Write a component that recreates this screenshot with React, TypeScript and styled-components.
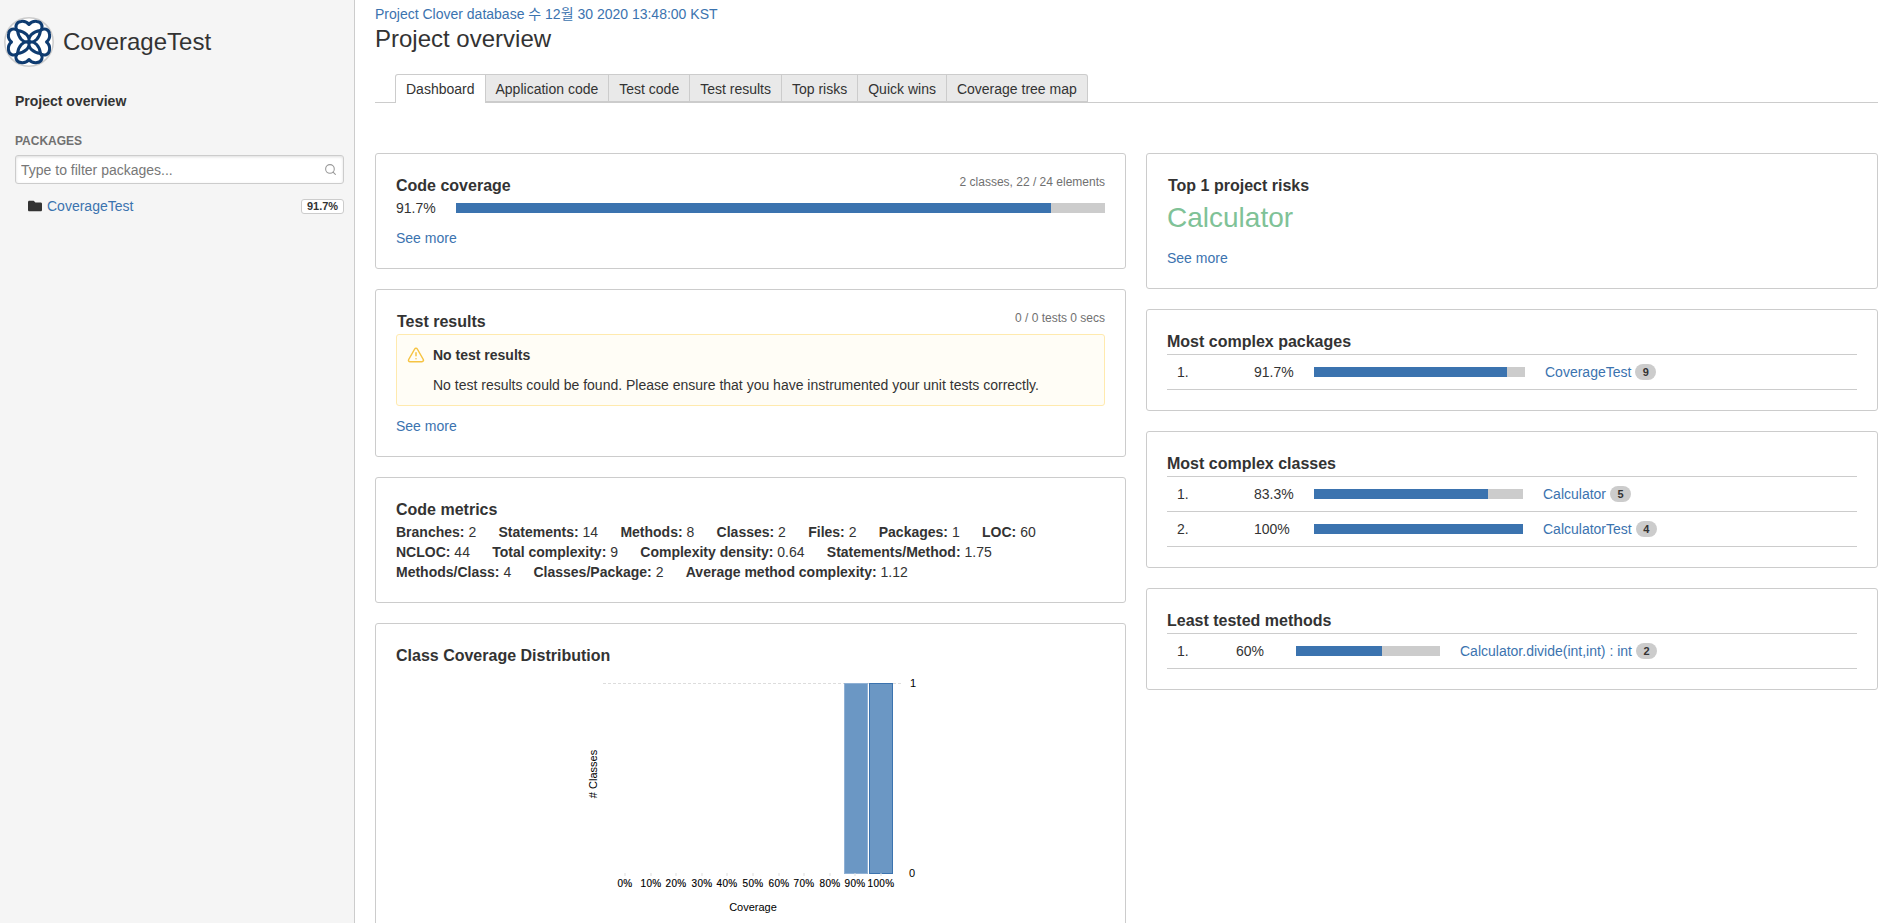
import React from 'react'
import styled, { createGlobalStyle } from 'styled-components'
import { Search, TriangleAlert } from 'lucide-react'
import { FaFolder } from 'react-icons/fa'

const GlobalStyle = createGlobalStyle`
  html, body {
    margin: 0;
    height: 100%;
    overflow: hidden;
    background: #fff;
  }
  body {
    font-family: "Liberation Sans", Arial, sans-serif;
    font-size: 14px;
    line-height: 20px;
    color: #333;
  }
`

const Page = styled.div`
  display: flex;
  height: 923px;
  overflow: hidden;
`

const Sidebar = styled.aside`
  flex: 0 0 355px;
  box-sizing: border-box;
  background: #f5f5f5;
  border-right: 1px solid #ccc;
`
const Brand = styled.div`
  display: flex;
  align-items: center;
  gap: 9px;
  padding: 17px 0 0 4px;
`
const BrandName = styled.div`
  font-size: 24px;
  line-height: 50px;
`
const NavTitle = styled.div`
  margin: 24px 0 0 15px;
  font-weight: 700;
`
const NavSection = styled.div`
  margin: 22px 0 0 15px;
  font-size: 12px;
  line-height: 16px;
  font-weight: 700;
  color: #707070;
  text-transform: uppercase;
`
const FilterBox = styled.div`
  position: relative;
  margin: 6px 10px 0 15px;
`
const FilterInput = styled.input`
  display: block;
  box-sizing: border-box;
  width: 100%;
  height: 29px;
  padding: 0 24px 0 5px;
  border: 1px solid #ccc;
  border-radius: 3px;
  box-shadow: inset 0 1px 3px #ddd;
  background: #fff;
  font: 14px "Liberation Sans", Arial, sans-serif;
  &::placeholder {
    color: #777;
    opacity: 1;
  }
`
const FilterIcon = styled.span`
  position: absolute;
  top: 8px;
  right: 7px;
  display: flex;
  color: #999;
`
const PackageRow = styled.div`
  display: flex;
  align-items: center;
  margin: 12px 10px 0 28px;
  color: #333;
`
const PackageLink = styled.a`
  flex: 1;
  margin-left: 5px;
  color: #3b73af;
`
const PackageBadge = styled.span`
  box-sizing: border-box;
  width: 43px;
  height: 15px;
  border: 1px solid #ccc;
  border-radius: 3px;
  background: #fff;
  font-size: 11px;
  font-weight: 700;
  line-height: 13px;
  text-align: center;
`

const Main = styled.main`
  flex: 1;
  min-width: 0;
  padding: 4px 14px 0 20px;
`
const Breadcrumb = styled.a`
  display: block;
  font-family: "Liberation Sans", Arial, "Noto Sans CJK KR", sans-serif;
  color: #3b73af;
`
const PageTitle = styled.h1`
  margin: 1px 0 0;
  font-size: 24px;
  line-height: 28px;
  font-weight: 400;
`
const TabBar = styled.nav`
  display: flex;
  height: 28px;
  margin-top: 21px;
  padding-left: 20px;
  border-bottom: 1px solid #ccc;
`
const Tab = styled.a<{ $active?: boolean }>`
  box-sizing: border-box;
  height: ${({ $active }) => ($active ? '29px' : '28px')};
  padding: 4px 10px 0;
  border: 1px solid #ccc;
  border-left-width: ${({ $active }) => ($active ? '1px' : '0')};
  border-bottom-width: ${({ $active }) => ($active ? '0' : '1px')};
  background: ${({ $active }) => ($active ? '#fff' : '#e9e9e9')};
  color: #333;
  white-space: nowrap;
  &:first-child {
    border-top-left-radius: 3px;
  }
  &:last-child {
    border-top-right-radius: 3px;
  }
`
const Columns = styled.div`
  display: grid;
  grid-template-columns: 751px 732px;
  gap: 20px;
  margin-top: 50px;
`
const Column = styled.div`
  display: flex;
  flex-direction: column;
  gap: 20px;
`
const Card = styled.section<{ $height?: number }>`
  box-sizing: border-box;
  padding: 21px 20px 20px;
  border: 1px solid #ccc;
  border-radius: 3px;
  background: #fff;
  ${({ $height }) => ($height ? `height: ${$height}px; flex: none;` : '')}
`
const CardHead = styled.div`
  display: flex;
  justify-content: space-between;
`
const CardTitle = styled.h3<{ $inset?: boolean }>`
  margin: 0 0 -2px ${({ $inset }) => ($inset ? '1px' : '0')};
  font-size: 16px;
  line-height: 22px;
  font-weight: 700;
`
const CardMeta = styled.span`
  margin-top: -1px;
  font-size: 12px;
  line-height: 16px;
  color: #707070;
`
const CoverageRow = styled.div`
  display: grid;
  grid-template-columns: 60px 1fr;
  align-items: center;
  margin-top: 3px;
`
const Bar = styled.div`
  height: 10px;
  background: #ccc;
`
const BarFill = styled.div`
  height: 100%;
  background: #3b73af;
`
const SeeMore = styled.a<{ $gap?: number }>`
  display: block;
  margin-top: ${({ $gap }) => $gap ?? 10}px;
  color: #3b73af;
`
const Notice = styled.div`
  display: flex;
  gap: 8px;
  margin-top: 3px;
  padding: 10px;
  border: 1px solid #ffeaae;
  border-radius: 3px;
  background: #fffdf6;
`
const NoticeIcon = styled.span`
  display: flex;
  flex: none;
  height: 20px;
  align-items: center;
  color: #f6c342;
`
const NoticeTitle = styled.div`
  font-weight: 700;
`
const NoticeText = styled.div`
  margin-top: 10px;
`
const Metrics = styled.div`
  margin-top: 3px;
`
const MetricLine = styled.div`
  display: flex;
  gap: 22.3px;
`
const MetricName = styled.b`
  font-weight: 700;
`
const Chart = styled.svg`
  display: block;
  margin-top: 7px;
  font-family: "Liberation Sans", Arial, sans-serif;
  font-size: 10px;
  color: #000;
`
const AxisTitle = styled.text<{ $size: number }>`
  font-size: ${({ $size }) => $size}px;
`
const RiskName = styled.div`
  margin-top: 6px;
  font-size: 28px;
  line-height: 34px;
  color: #7fc297;
`
const RankTable = styled.div`
  margin-top: 3px;
  border-top: 1px solid #ccc;
`
const RankRow = styled.div<{ $columns: string }>`
  display: grid;
  grid-template-columns: ${({ $columns }) => $columns};
  align-items: center;
  box-sizing: border-box;
  height: 35px;
  padding-left: 10px;
  border-bottom: 1px solid #ccc;
`
const RankName = styled.div`
  display: flex;
  align-items: center;
  margin-left: 20px;
`
const RankLink = styled.a`
  color: #3b73af;
`
const CountBadge = styled.span`
  width: 21px;
  height: 16px;
  margin-left: 4px;
  border-radius: 8px;
  background: #ccc;
  font-size: 11px;
  font-weight: 700;
  line-height: 16px;
  text-align: center;
`

const tabs = ['Dashboard', 'Application code', 'Test code', 'Test results', 'Top risks', 'Quick wins', 'Coverage tree map']

const metrics = [
	[['Branches', '2'], ['Statements', '14'], ['Methods', '8'], ['Classes', '2'], ['Files', '2'], ['Packages', '1'], ['LOC', '60']],
	[['NCLOC', '44'], ['Total complexity', '9'], ['Complexity density', '0.64'], ['Statements/Method', '1.75']],
	[['Methods/Class', '4'], ['Classes/Package', '2'], ['Average method complexity', '1.12']]
]

const chartTicks = [
	['0%', 625], ['10%', 651], ['20%', 676], ['30%', 702], ['40%', 727], ['50%', 753],
	['60%', 779], ['70%', 804], ['80%', 830], ['90%', 855], ['100%', 881]
] as const

const rankings = [
	{
		title: 'Most complex packages',
		columns: '77px 60px 211px 1fr',
		rows: [{ pct: 91.7, label: '91.7%', name: 'CoverageTest', count: 9 }]
	},
	{
		title: 'Most complex classes',
		columns: '77px 60px 209px 1fr',
		rows: [
			{ pct: 83.3, label: '83.3%', name: 'Calculator', count: 5 },
			{ pct: 100, label: '100%', name: 'CalculatorTest', count: 4 }
		]
	},
	{
		title: 'Least tested methods',
		columns: '59px 60px 144px 1fr',
		rows: [{ pct: 60, label: '60%', name: 'Calculator.divide(int,int) : int', count: 2 }]
	}
]

const Logo = () => (
	<svg width="50" height="50" viewBox="0 0 50 50">
		<circle cx="25" cy="25" r="24.2" fill="#fff" stroke="#ccc" strokeWidth="1.5" />
		{[0, 90, 180, 270].map((angle) => (
			<path
				key={angle}
				transform={`rotate(${angle} 25 25)`}
				d="M25 25C24 19 29 14.5 36.5 13.5C39.5 10 38 5 33 4.5C30 4 27 5 25 7.5C23 5 20 4 17 4.5C12 5 10.5 10 13.5 13.5C21 14.5 26 19 25 25Z"
				fill="none"
				stroke="#0e3b70"
				strokeWidth="3"
				strokeLinejoin="round"
			/>
		))}
	</svg>
)

const App: React.FC = () => {
	return (
		<Page>
			<GlobalStyle />
			<Sidebar>
				<Brand>
					<Logo />
					<BrandName>CoverageTest</BrandName>
				</Brand>
				<NavTitle>Project overview</NavTitle>
				<NavSection>Packages</NavSection>
				<FilterBox>
					<FilterInput placeholder="Type to filter packages..." />
					<FilterIcon><Search size={13} /></FilterIcon>
				</FilterBox>
				<PackageRow>
					<FaFolder size={14} />
					<PackageLink>CoverageTest</PackageLink>
					<PackageBadge>91.7%</PackageBadge>
				</PackageRow>
			</Sidebar>
			<Main>
				<Breadcrumb>Project Clover database 수 12월 30 2020 13:48:00 KST</Breadcrumb>
				<PageTitle>Project overview</PageTitle>
				<TabBar>
					{tabs.map((tab, i) => <Tab key={tab} $active={i === 0}>{tab}</Tab>)}
				</TabBar>
				<Columns>
					<Column>
						<Card>
							<CardHead>
								<CardTitle>Code coverage</CardTitle>
								<CardMeta>2 classes, 22 / 24 elements</CardMeta>
							</CardHead>
							<CoverageRow>
								<span>91.7%</span>
								<Bar><BarFill style={{ width: '91.7%' }} /></Bar>
							</CoverageRow>
							<SeeMore>See more</SeeMore>
						</Card>
						<Card>
							<CardHead>
								<CardTitle $inset>Test results</CardTitle>
								<CardMeta>0 / 0 tests 0 secs</CardMeta>
							</CardHead>
							<Notice>
								<NoticeIcon><TriangleAlert size={18} /></NoticeIcon>
								<div>
									<NoticeTitle>No test results</NoticeTitle>
									<NoticeText>No test results could be found. Please ensure that you have instrumented your unit tests correctly.</NoticeText>
								</div>
							</Notice>
							<SeeMore>See more</SeeMore>
						</Card>
						<Card>
							<CardTitle>Code metrics</CardTitle>
							<Metrics>
								{metrics.map((line) => (
									<MetricLine key={line[0][0]}>
										{line.map(([name, value]) => (
											<span key={name}><MetricName>{name}:</MetricName> {value}</span>
										))}
									</MetricLine>
								))}
							</Metrics>
						</Card>
						<Card $height={400}>
							<CardTitle>Class Coverage Distribution</CardTitle>
							<Chart width="709" height="260" viewBox="396 672 709 260">
								<line x1="603" y1="683.5" x2="903" y2="683.5" stroke="#ddd" strokeDasharray="3 2" />
								<rect x="844.5" y="683.5" width="23" height="190" fill="#6b97c4" stroke="#8fb0d4" />
								<rect x="869.5" y="683.5" width="23" height="190" fill="#6b97c4" stroke="#3b73af" />
								<AxisTitle $size={11} x="913" y="687" textAnchor="middle">1</AxisTitle>
								<AxisTitle $size={11} x="912" y="877" textAnchor="middle">0</AxisTitle>
								{chartTicks.map(([label, x]) => (
									<g key={label}>
										<line x1={x} y1="873" x2={x} y2="876" stroke="#ddd" />
										<text x={x} y="887" textAnchor="middle" letterSpacing="0.3" stroke="#000" strokeWidth="0.15">{label}</text>
									</g>
								))}
								<AxisTitle $size={11} x="753" y="911" textAnchor="middle">Coverage</AxisTitle>
								<AxisTitle $size={11} transform="rotate(-90 597 774)" x="597" y="774" textAnchor="middle"># Classes</AxisTitle>
							</Chart>
						</Card>
					</Column>
					<Column>
						<Card>
							<CardTitle $inset>Top 1 project risks</CardTitle>
							<RiskName>Calculator</RiskName>
							<SeeMore $gap={13}>See more</SeeMore>
						</Card>
						{rankings.map((ranking) => (
							<Card key={ranking.title}>
								<CardTitle>{ranking.title}</CardTitle>
								<RankTable>
									{ranking.rows.map((row, i) => (
										<RankRow key={row.name} $columns={ranking.columns}>
											<span>{i + 1}.</span>
											<span>{row.label}</span>
											<Bar><BarFill style={{ width: `${row.pct}%` }} /></Bar>
											<RankName>
												<RankLink>{row.name}</RankLink>
												<CountBadge>{row.count}</CountBadge>
											</RankName>
										</RankRow>
									))}
								</RankTable>
							</Card>
						))}
					</Column>
				</Columns>
			</Main>
		</Page>
	)
}

export default App
